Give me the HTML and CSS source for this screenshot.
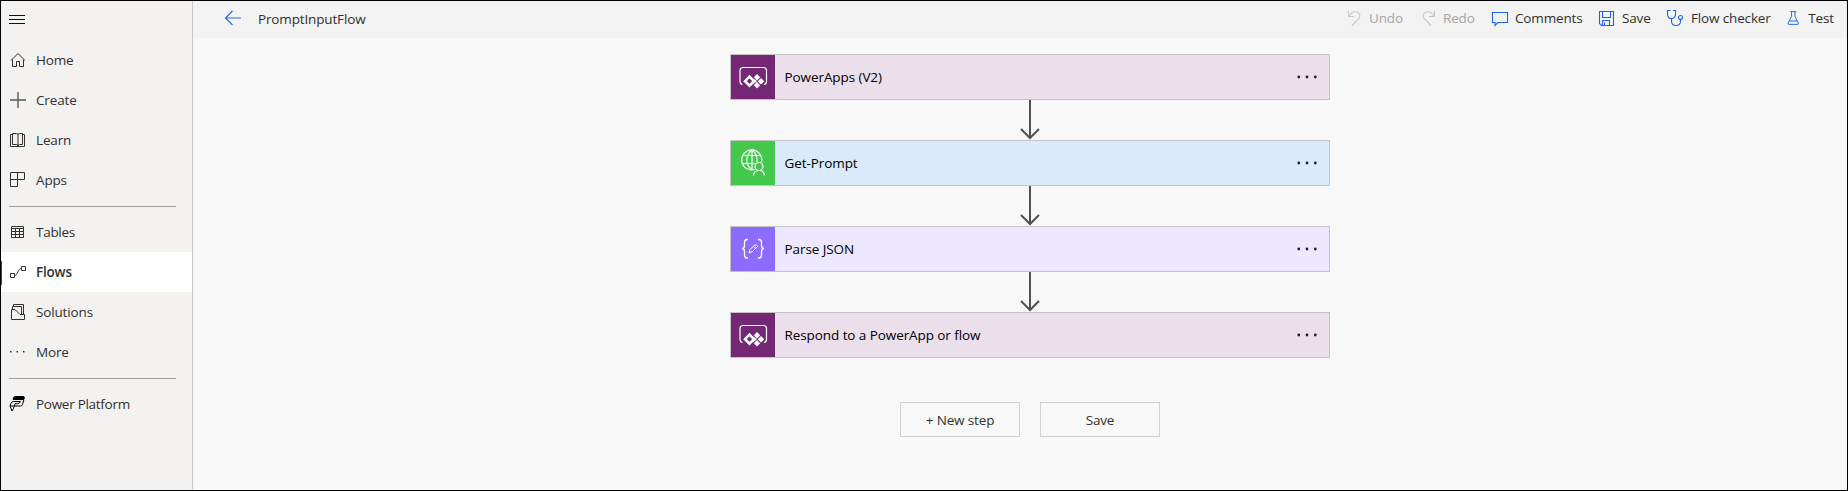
FILE: index.html
```html
<!DOCTYPE html>
<html lang="en">
<head>
<meta charset="utf-8">
<title>PromptInputFlow</title>
<link rel="stylesheet" href="styles.css">
</head>
<body>
<svg class="defs" width="0" height="0">
  <symbol id="powerapps" viewBox="0 0 44 44">
    <path d="M11.500 29.500Q9 29 9 26.500V15.500Q9 12.500 12 12.500H32.500Q35.500 12.500 35.500 15.500V26.500Q35.500 29 33 29.500" fill="none" stroke="#fff" stroke-width="1.200"/>
    <path d="M18.500 21.700L23 26.200L18.500 30.700L14 26.200Z" fill="none" stroke="#fff" stroke-width="2.600"/>
    <path d="M26 19L29.200 22.200L26 25.400L22.800 22.200ZM30 23L33.200 26.200L30 29.400L26.800 26.200ZM26 27L29.200 30.200L26 33.400L22.800 30.200ZM22.500 23.500L26 26.200L22.500 28.900L21 26.200Z" fill="#fff"/>
  </symbol>
  <symbol id="dots" viewBox="0 0 24 6"><circle cx="3.800" cy="3" r="1.400"/><circle cx="12" cy="3" r="1.400"/><circle cx="20.300" cy="3" r="1.400"/></symbol>
</svg>
<div class="app">
  <nav class="sidebar">
    <div class="menu"><svg width="18" height="12"><path d="M0 1.500H16M0 5.500H16M0 9.500H16" stroke="#111"/></svg></div>
    <a class="item"><svg class="icon" viewBox="0 0 18 18"><path d="M2 9.500L9 2.500L16 9.500M3.500 8.500V15.500H7.500V10.500H10.500V15.500H14.500V8.500"/></svg><span>Home</span></a>
    <a class="item"><svg class="icon plus" viewBox="0 0 18 18"><path d="M9 1V17M1 9H17"/></svg><span>Create</span></a>
    <a class="item"><svg class="icon" viewBox="0 0 18 18"><path d="M3.500 2.500H7.500Q9 2.500 9 4Q9 2.500 10.500 2.500H13.500V13.500H10.500Q9 13.500 9 15Q9 13.500 7.500 13.500H3.500ZM9 4V15M3.500 3.500H1.500V15.500H15.500V3.500H13.500"/></svg><span>Learn</span></a>
    <a class="item"><svg class="icon" viewBox="0 0 18 18"><path d="M1.500 1.500H15.500V8.500H1.500ZM1.500 8.500V15.500H8.500V1.500"/></svg><span>Apps</span></a>
    <hr>
    <a class="item"><svg class="icon" viewBox="0 0 18 18"><path d="M2.500 3.500H14.500V14.500H2.500ZM2.500 5.500H14.500M2.500 8.500H14.500M2.500 11.500H14.500M6.500 5.500V14.500M10.500 5.500V14.500"/></svg><span class="tight">Tables</span></a>
    <a class="item selected"><svg class="icon" viewBox="0 0 18 18"><path d="M1.500 10.500H5.500V14.500H1.500ZM12.500 3.500H16.500V7.500H12.500ZM5.500 12.500C9 12.500 8.500 5.500 12.500 5.500"/></svg><span>Flows</span></a>
    <a class="item"><svg class="icon" viewBox="0 0 18 18"><path d="M2.500 6.500H6L11 11.500H15.500V16.500H2.500ZM3.500 6.500V3.500H12.500V11.500M4.500 3.500V1.500H14.500V11.500"/></svg><span>Solutions</span></a>
    <a class="item"><svg class="icon more" viewBox="0 0 18 18"><path d="M1 8h1.500v1.500H1zM7.500 8H9v1.500H7.500zM14 8h1.500v1.500H14z"/></svg><span>More</span></a>
    <hr>
    <a class="item"><svg class="icon platform" viewBox="0 0 18 18"><path d="M6 1.500H14Q15.700 1.500 15.300 3L14.800 4.500H4L4.500 3Q4.900 1.500 6 1.500Z" fill="#000"/><path d="M14.800 5L13.500 9.500Q13 11 11.500 11H1L2 8.300Q2.800 6.500 4.500 6.500H11.500Q10.500 8.700 8.500 8.700H6L4.500 13.500L3 16L1 11"/></svg><span class="tight">Power Platform</span></a>
  </nav>
  <main class="main">
    <header class="header">
      <svg class="back" viewBox="0 0 18 18"><path d="M8.500 2L1.500 9L8.500 16M1.500 9H17"/></svg>
      <h1><span>PromptInputFlow</span></h1>
      <div class="tools">
        <div class="tool off undo"><svg viewBox="0 0 18 18"><path d="M2.500 2V7.500H8M2.500 7.500Q6.500 1.500 11 3Q16 5.500 12.500 10L6 16.500"/></svg><span>Undo</span></div>
        <div class="tool off redo"><svg viewBox="0 0 18 18"><path d="M14.500 2V7.500H9M14.500 7.500Q10.500 1.500 6 3Q1 5.500 4.500 10L11 16.500"/></svg><span>Redo</span></div>
        <div class="tool comments"><svg viewBox="0 0 18 18"><path d="M1.500 3.500H16.500V13.500H7L4 16.500V13.500H1.500Z"/></svg><span>Comments</span></div>
        <div class="tool save"><svg viewBox="0 0 18 18"><path d="M1.500 2.500H15.500V16.500H3.500L1.500 14.500ZM4.500 2.500V8.500H12.500V2.500M4.500 16.500V11.500H11.500V16.500M6.500 13.500V16.500"/></svg><span>Save</span></div>
        <div class="tool checker"><svg viewBox="0 0 18 18"><path d="M4.500 1.500H1.500V5Q1.500 9.500 5.500 9.500Q9.500 9.500 9.500 5V1.500H7M5.500 9.500V12Q5.500 16.500 10 16.500Q14.500 16.500 14.500 12V10.500"/><circle cx="14.500" cy="8.500" r="2"/></svg><span>Flow checker</span></div>
        <div class="tool test"><svg viewBox="0 0 18 18"><path d="M5 1.500H12M6.500 1.500V7L2.500 15Q2 16.500 3.500 16.500H13.500Q15 16.500 14.500 15L10.500 7V1.500M4 12.500H13"/></svg><span>Test</span></div>
      </div>
    </header>
    <section class="flow">
      <article class="card apps"><div class="tile"><svg><use href="#powerapps"/></svg></div><span>PowerApps (V2)</span><svg class="dots"><use href="#dots"/></svg></article>
      <svg class="arrow" viewBox="0 0 20 40"><path d="M10 0V38M1 29L10 38L19 29"/></svg>
      <article class="card get"><div class="tile"><svg viewBox="0 0 44 44" fill="none" stroke="#fff" stroke-width="1.200"><path d="M23.500 28.500A10 10 0 1 1 30.500 21M21 9C14 15 14 23 21 29M21 9C25 12 26.500 17 26 21M12.500 14.500H29.500M11.500 22.500H25M21 9V28"/><circle cx="28" cy="25.500" r="4"/><path d="M22.500 34.500Q23 29.500 28 29.500Q33 29.500 33.500 34.500"/></svg></div><span>Get-Prompt</span><svg class="dots"><use href="#dots"/></svg></article>
      <svg class="arrow" viewBox="0 0 20 40"><path d="M10 0V38M1 29L10 38L19 29"/></svg>
      <article class="card json"><div class="tile"><svg viewBox="0 0 44 44" fill="none" stroke="#fff" stroke-width="1.300"><path d="M17 12.500H16Q13.500 12.500 13.500 15.500V18.500Q13.500 21.500 11 21.500Q13.500 21.500 13.500 25V28Q13.500 31 16 31H17M27 12.500H28Q30.500 12.500 30.500 15.500V18.500Q30.500 21.500 33 21.500Q30.500 21.500 30.500 25V28Q30.500 31 28 31H27"/><path d="M18 26L19 22.500L24 17.800Q25.500 17.500 26.500 19.500L21.500 24.500ZM22.500 19.300L24.800 21.500" stroke-width="1"/></svg></div><span>Parse JSON</span><svg class="dots"><use href="#dots"/></svg></article>
      <svg class="arrow" viewBox="0 0 20 40"><path d="M10 0V38M1 29L10 38L19 29"/></svg>
      <article class="card apps"><div class="tile"><svg><use href="#powerapps"/></svg></div><span class="wide">Respond to a PowerApp or flow</span><svg class="dots"><use href="#dots"/></svg></article>
      <div class="actions"><button><span>+ New step</span></button><button><span>Save</span></button></div>
    </section>
  </main>
</div>
</body>
</html>
```
FILE: styles.css
```css
* { box-sizing: border-box; }
body { margin: 0; font: 13.5px/20px "Open Sans", "Noto Sans", sans-serif; color: #323130; }
.defs { display: block; height: 0; }
.app { display: flex; width: 1848px; height: 491px; border: 1px solid #000; background: #f8f8f8; overflow: hidden; }
span { white-space: nowrap; letter-spacing: -0.15px; }
.tight { letter-spacing: -0.28px; }
.wide { letter-spacing: -0.1px; }
.sidebar { width: 192px; flex: none; background: #f3f2f1; border-right: 1px solid #c8c8c8; }
.menu { height: 39px; padding: 13px 0 0 8px; }
.menu svg { display: block; }
.item { display: flex; align-items: center; height: 40px; padding-left: 8px; gap: 9px; }
.icon { width: 18px; height: 18px; fill: none; stroke: #323130; stroke-width: 1; }
.plus { stroke: #5a5a5a; stroke-width: 1.4; }
.more { fill: #323130; stroke: none; }
.platform { stroke: #000; }
.selected { background: #fff linear-gradient(#742774, #742774) 0 9px / 1px 24px no-repeat; font-weight: 600; }
.selected span { letter-spacing: -0.2px; }
hr { width: 167px; height: 1px; margin: 6px 0 5px 8px; border: 0; background: #a19f9d; }
.main { flex: 1; }
.header { display: flex; align-items: center; height: 37px; padding: 0 13px 4px 31px; background: #f3f3f3; }
.back { width: 18px; height: 18px; margin-top: 1px; fill: none; stroke: #2b6cf0; stroke-width: 1.2; }
h1 { margin: 2px 0 0 16px; font-size: inherit; font-weight: 400; }
.tools { display: flex; margin-left: auto; }
.tool { display: flex; align-items: center; gap: 6px; }
.tool svg { width: 18px; height: 18px; fill: none; stroke: #1a66f0; stroke-width: 1.1; }
.off { color: #a6a6a6; }
.off svg { stroke: #c8c8c8; }
.undo { width: 74px; gap: 5px; }
.redo { width: 71px; gap: 5px; }
.comments { width: 107px; }
.save { width: 68px; }
.checker { width: 120px; gap: 7px; }
.test { width: 48px; gap: 7px; }
.flow { display: flex; flex-direction: column; align-items: center; width: 600px; margin: 16px 0 0 537px; }
.card { display: flex; align-items: center; width: 600px; height: 46px; border: 1px solid #c4c4c4; color: #000; }
.tile { width: 44px; height: 44px; margin-right: 9.5px; }
.tile svg { display: block; width: 44px; height: 44px; }
.card span { letter-spacing: -0.08px; }
.apps { background: #ebdfeb; }
.apps .tile { background: #742774; }
.get { background: #d9ebfb; }
.get .tile { background: #43c84c; }
.json { background: #ede8ff; }
.json .tile { background: #8c6cff; }
.dots { width: 24px; height: 6px; margin: 0 10.5px 0 auto; fill: #222; }
.arrow { width: 20px; height: 40px; fill: none; stroke: #505050; stroke-width: 2; }
.actions { display: flex; gap: 20px; margin-top: 44px; }
button { width: 120px; height: 35px; padding: 0; border: 1px solid #d0d0d0; background: #f8f8f8; color: #323130; font: inherit; }
```
